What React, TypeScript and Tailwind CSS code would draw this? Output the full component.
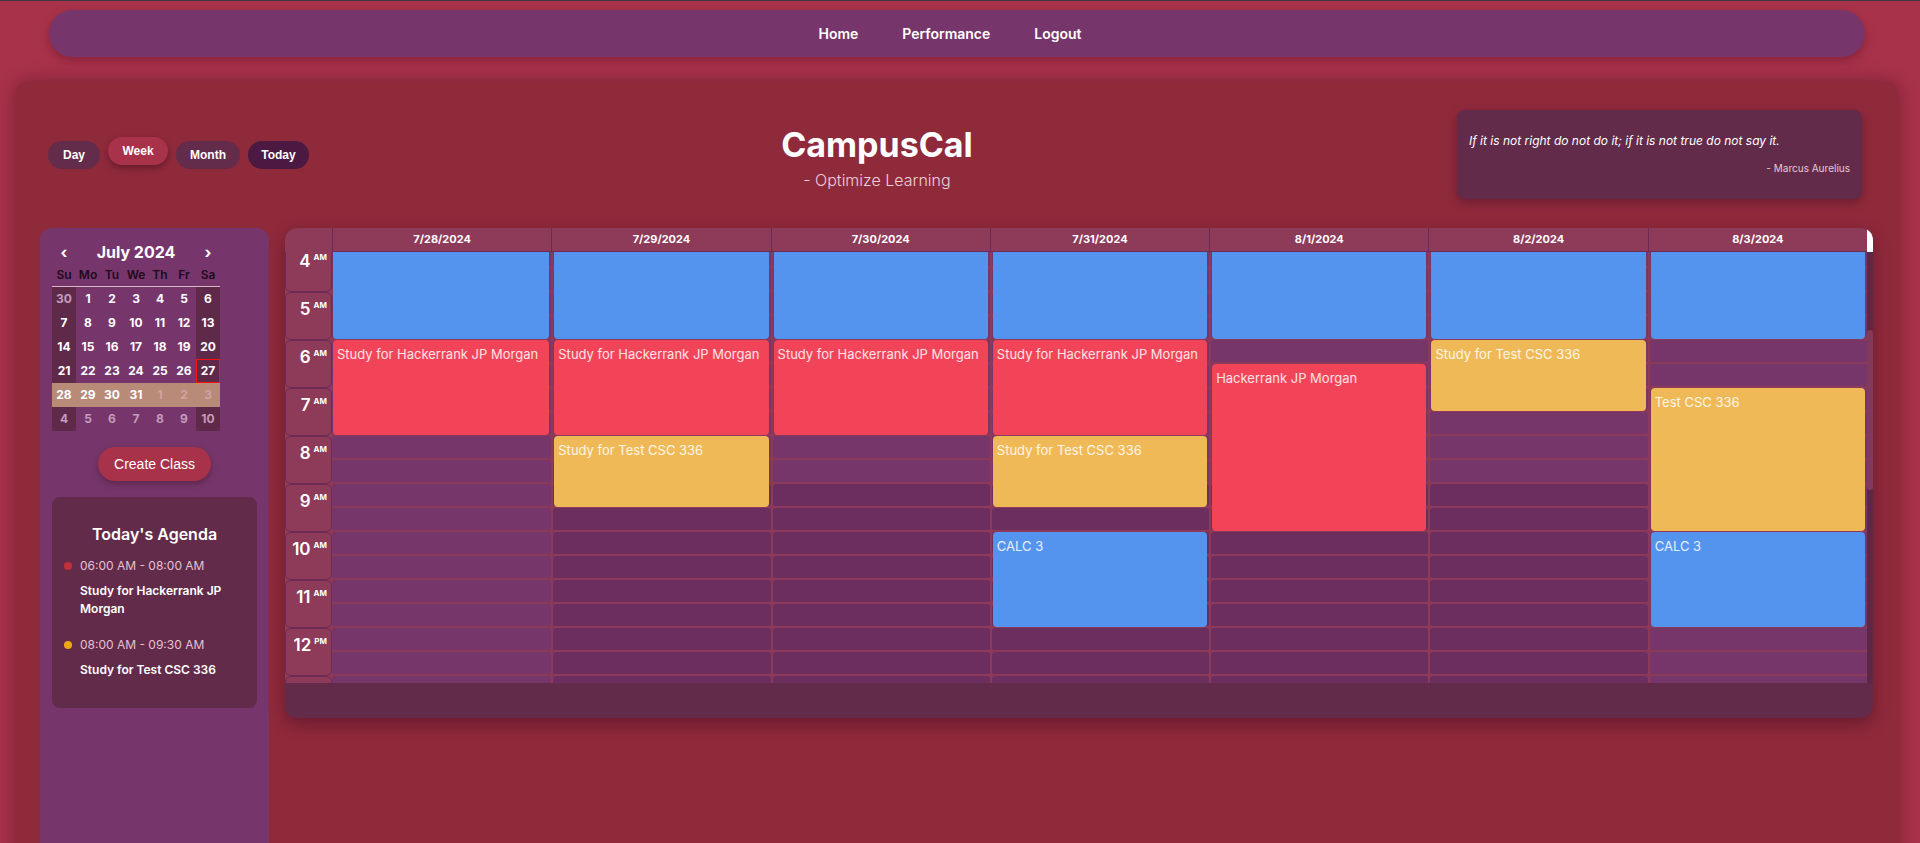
import React from "react";

const sans = "font-['Inter','Noto_Sans',sans-serif]";

const days = ["7/28/2024", "7/29/2024", "7/30/2024", "7/31/2024", "8/1/2024", "8/2/2024", "8/3/2024"];
const hours = [3, 4, 5, 6, 7, 8, 9, 10, 11, 12, 13, 14];

type Ev = { start: number; end: number; title?: string; color: string };

const BLUE = "bg-[#5594ee]";
const RED = "bg-[#f24459]";
const YELLOW = "bg-[#f0b957]";

const events: Ev[][] = [
  [{ start: 3, end: 6, color: BLUE }, { start: 6, end: 8, title: "Study for Hackerrank JP Morgan", color: RED }],
  [
    { start: 3, end: 6, color: BLUE },
    { start: 6, end: 8, title: "Study for Hackerrank JP Morgan", color: RED },
    { start: 8, end: 9.5, title: "Study for Test CSC 336", color: YELLOW },
  ],
  [{ start: 3, end: 6, color: BLUE }, { start: 6, end: 8, title: "Study for Hackerrank JP Morgan", color: RED }],
  [
    { start: 3, end: 6, color: BLUE },
    { start: 6, end: 8, title: "Study for Hackerrank JP Morgan", color: RED },
    { start: 8, end: 9.5, title: "Study for Test CSC 336", color: YELLOW },
    { start: 10, end: 12, title: "CALC 3", color: BLUE },
  ],
  [{ start: 3, end: 6, color: BLUE }, { start: 6.5, end: 10, title: "Hackerrank JP Morgan", color: RED }],
  [{ start: 3, end: 6, color: BLUE }, { start: 6, end: 7.5, title: "Study for Test CSC 336", color: YELLOW }],
  [
    { start: 3, end: 6, color: BLUE },
    { start: 7, end: 10, title: "Test CSC 336", color: YELLOW },
    { start: 10, end: 12, title: "CALC 3", color: BLUE },
  ],
];

// mini calendar rows: [day number, 1 if outside July]
const weeks: [number, number][][] = [
  [[30, 1], [1, 0], [2, 0], [3, 0], [4, 0], [5, 0], [6, 0]],
  [[7, 0], [8, 0], [9, 0], [10, 0], [11, 0], [12, 0], [13, 0]],
  [[14, 0], [15, 0], [16, 0], [17, 0], [18, 0], [19, 0], [20, 0]],
  [[21, 0], [22, 0], [23, 0], [24, 0], [25, 0], [26, 0], [27, 0]],
  [[28, 0], [29, 0], [30, 0], [31, 0], [1, 1], [2, 1], [3, 1]],
  [[4, 1], [5, 1], [6, 1], [7, 1], [8, 1], [9, 1], [10, 1]],
];

function MiniCalendar() {
  return (
    <div className="w-[168px] ml-3">
      <div className="h-6 flex items-center justify-between text-white font-bold">
        <span className="w-6 text-center text-[16px]">‹</span>
        <span className="text-[16px]">July 2024</span>
        <span className="w-6 text-center text-[16px]">›</span>
      </div>
      <div className="grid grid-cols-7 h-[23px] items-center border-b border-[#d9b6c9] text-[12px] font-semibold text-[#1f0a1b]">
        {["Su", "Mo", "Tu", "We", "Th", "Fr", "Sa"].map((d) => (
          <span key={d} className="text-center">
            {d}
          </span>
        ))}
      </div>
      {weeks.map((w, wi) => (
        <div key={wi} className={`grid grid-cols-7 h-6 ${wi === 4 ? "bg-[#b88a78]" : ""}`}>
          {w.map(([n, other], di) => {
            const weekend = di === 0 || di === 6;
            const bg = wi === 4 ? "" : weekend ? "bg-[#5f2a4a]" : "";
            const color = other ? (wi === 4 ? "text-[#d3a2a4]" : "text-[#c79abb]") : "text-white";
            const today = wi === 3 && di === 6;
            return (
              <div
                key={di}
                className={`flex items-center justify-center text-[12px] font-bold ${bg} ${color} ${
                  today ? "border border-[#ff1010]" : ""
                }`}
              >
                {n}
              </div>
            );
          })}
        </div>
      ))}
    </div>
  );
}

function Agenda() {
  const items = [
    { time: "06:00 AM - 08:00 AM", title: "Study for Hackerrank JP Morgan", dot: "bg-[#c2303a]" },
    { time: "08:00 AM - 09:30 AM", title: "Study for Test CSC 336", dot: "bg-[#f0a812]" },
  ];
  return (
    <div className="mx-3 mt-4 rounded-lg bg-[#622b4a] pt-[25px] pb-[29px] px-3">
      <h3 className="text-center text-white text-[16px] leading-6 font-semibold">Today's Agenda</h3>
      <div className="mt-3 flex flex-col gap-[19px]">
        {items.map((it) => (
          <div key={it.time}>
            <div className="flex items-center gap-2 h-4">
              <span className={`w-2 h-2 rounded-full ${it.dot}`} />
              <span className="text-[12px] text-[#e4c2d3]">{it.time}</span>
            </div>
            <div className="mt-2 pl-4 pr-2 text-[12px] leading-[18px] font-semibold text-white">{it.title}</div>
          </div>
        ))}
      </div>
    </div>
  );
}

function WeekGrid() {
  return (
    <div className="flex-1 rounded-xl bg-[#622b4a] overflow-hidden shadow-[0_6px_16px_rgba(60,10,30,0.45)] h-[490px] flex flex-col">
      {/* header */}
      <div className="flex h-6 bg-[#8e3b5a]">
        <div className="w-[47px] rounded-tl-xl" />
        <div className="flex-1 grid grid-cols-7">
          {days.map((d) => (
            <div
              key={d}
              className="border-l border-b border-[#6b2b55] flex items-center justify-center text-white text-[11px] font-bold"
            >
              {d}
            </div>
          ))}
        </div>
        <div className="w-[6px] bg-white rounded-tr-md" />
      </div>
      {/* body, scrolled a little past 3 AM */}
      <div className="flex h-[431px] overflow-hidden">
        <div className="w-[47px] overflow-hidden">
          <div className="-mt-[56px] bg-[#8e3b5a]">
            {hours.map((h) => (
              <div key={h} className="h-12 border border-[#6b2b55] rounded-md flex justify-end pr-[4px] pt-[6px]">
                {h >= 4 && h <= 12 && (
                  <>
                    <span className="text-white text-[17px] leading-5 font-semibold">{h % 12 || 12}</span>
                    <span className="text-white text-[8px] leading-3 font-bold ml-[3px]">{h < 12 ? "AM" : "PM"}</span>
                  </>
                )}
              </div>
            ))}
          </div>
        </div>
        <div className="flex-1 overflow-hidden">
          <div className="-mt-[56px] grid grid-cols-7 bg-[#8d3a5a]">
            {days.map((d, ci) => {
              const weekend = ci === 0 || ci === 6;
              return (
                <div key={d} className={`relative ${ci > 0 ? "border-l-2 border-[#8d3a5a]" : ""}`}>
                  {hours.flatMap((h) =>
                    [0, 0.5].map((half) => {
                      const light = weekend || h < 9;
                      return (
                        <div
                          key={h + half}
                          className={`h-6 border-b-2 border-[#8d3a5a] rounded-[3px] ${
                            light ? "bg-[#76366a]" : "bg-[#6c2e5e]"
                          }`}
                        />
                      );
                    })
                  )}
                  {events[ci].map((e, i) => (
                    <div
                      key={i}
                      className={`absolute left-[1px] right-[2px] rounded-[4px] ${e.color} px-1 pt-[4px] text-[13px] leading-5 text-white/85`}
                      style={{ top: (e.start - 3) * 48, height: (e.end - e.start) * 48 - 1 }}
                    >
                      {e.title}
                    </div>
                  ))}
                </div>
              );
            })}
          </div>
        </div>
        <div className="w-[6px] bg-[#5d2747] flex flex-col">
          <div className="mt-[78px] h-[160px] rounded-sm bg-[#823a5c]" />
        </div>
      </div>
    </div>
  );
}

export default function App() {
  return (
    <div className={`min-h-[843px] bg-[#a8324a] border-t border-[#3c3c3c] ${sans} overflow-hidden`}>
      {/* navbar */}
      <nav className="ml-[49px] mr-[55px] mt-[9px] h-[47px] rounded-full bg-[#77366b] shadow-[0_4px_10px_rgba(80,10,30,0.35)] flex items-center justify-center gap-[44px] pr-[14px]">
        <a className="text-white text-[14px] font-semibold">Home</a>
        <a className="text-white text-[14px] font-semibold">Performance</a>
        <a className="text-white text-[14px] font-semibold">Logout</a>
      </nav>

      <main className="ml-4 mr-[22px] mt-[25px] rounded-xl bg-[#8f2a3b] shadow-[0_0_18px_rgba(60,10,20,0.45)] h-[800px]">
        {/* header row */}
        <div className="grid grid-cols-[auto_1fr_auto] items-center pt-7 pl-8 pr-9">
          <div className="flex gap-2 font-['Liberation_Sans',Arial,sans-serif] text-[12px] font-semibold text-white">
            <button className="w-[52px] h-7 rounded-full bg-[#642c4b]">Day</button>
            <button className="w-[60px] h-7 -mt-1 rounded-full bg-[#a8324a] shadow-[0_3px_6px_rgba(50,10,20,0.45)]">
              Week
            </button>
            <button className="w-16 h-7 rounded-full bg-[#642c4b]">Month</button>
            <button className="w-[61px] h-7 rounded-full bg-[#4b1942]">Today</button>
          </div>
          <div className="flex flex-col items-center pr-3 pt-2">
            <h1 className="text-white text-[34px] leading-10 font-bold">CampusCal</h1>
            <p className="text-[#f0cfdb] text-[16px] leading-6 font-light mt-[3px]">- Optimize Learning</p>
          </div>
          <div className="w-[405px] h-[89px] rounded-lg bg-[#622b4a] shadow-[0_4px_10px_rgba(50,10,25,0.35)] pl-3 pr-3 pt-[22px]">
            <p className="italic text-white text-[12px] leading-[18px]">
              If it is not right do not do it; if it is not true do not say it.
            </p>
            <p className="text-right text-[#e8c8d6] text-[10px] leading-4 mt-[10px]">- Marcus Aurelius</p>
          </div>
        </div>

        {/* main row */}
        <div className="flex gap-4 pl-6 pr-[25px] mt-[29px]">
          <aside className="w-[229px] h-[620px] rounded-t-xl bg-[#76366b] pt-3 shrink-0">
            <MiniCalendar />
            <div className="flex justify-center mt-4">
              <button className="w-[113px] h-[34px] rounded-full bg-[#a8324a] text-white text-[14px] font-['Liberation_Sans',Arial,sans-serif] shadow-[0_3px_6px_rgba(50,10,20,0.35)]">
                Create Class
              </button>
            </div>
            <Agenda />
          </aside>
          <WeekGrid />
        </div>
      </main>
    </div>
  );
}
